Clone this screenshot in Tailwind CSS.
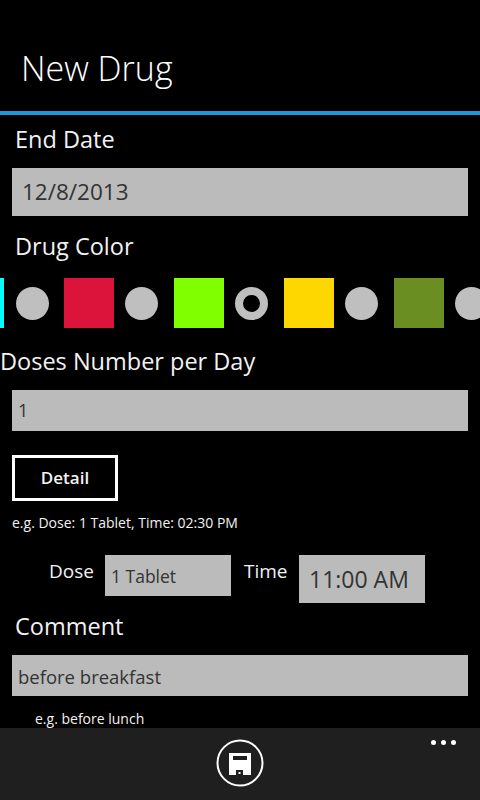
<!DOCTYPE html>
<html lang="en">

<head>
    <meta charset="UTF-8" />
    <meta name="viewport" content="width=device-width, initial-scale=1.0" />
    <title>New Drug</title>
    <script src="https://cdn.jsdelivr.net/npm/@tailwindcss/browser@4"></script>
</head>

<body class="bg-black">
    <div class="w-[480px] h-[800px] overflow-hidden flex flex-col bg-black text-[#f2f2f2] font-['Open_Sans',sans-serif]">
        <!-- Header -->
        <header class="h-[111px] shrink-0 pt-[43px] pl-[21px]">
            <h1 class="text-[34px] leading-[50px] font-light text-white">New Drug</h1>
        </header>
        <div class="h-1 shrink-0 bg-[#1b9ad8]"></div>

        <!-- Form -->
        <main class="flex-1 min-h-0 overflow-hidden">
            <div class="pl-[15px] mt-[6px] text-[23.5px] leading-[36px]">End Date</div>
            <div class="mx-3 mt-[11px] h-12 pl-[10px] bg-[#bbbbbb] text-[#333] text-[22.5px] leading-[48px]">12/8/2013</div>

            <div class="pl-[15px] mt-[13px] text-[23.5px] leading-[34px]">Drug Color</div>

            <!-- Color strip -->
            <div class="flex items-center w-[500px] h-[50px] mt-[15px] -ml-[46px]">
                <div class="w-[50px] h-[50px] shrink-0 bg-[#00ffff]"></div>
                <div class="w-[33px] h-[33px] shrink-0 ml-[12px] rounded-full bg-[#bfbfbf]"></div>
                <div class="w-[50px] h-[50px] shrink-0 ml-[15px] bg-[#dc143c]"></div>
                <div class="w-[33px] h-[33px] shrink-0 ml-[11px] rounded-full bg-[#bfbfbf]"></div>
                <div class="w-[50px] h-[50px] shrink-0 ml-[16px] bg-[#7fff00]"></div>
                <div class="w-[33px] h-[33px] shrink-0 ml-[11px] rounded-full border-[8px] border-[#bfbfbf] bg-black"></div>
                <div class="w-[50px] h-[50px] shrink-0 ml-[16px] bg-[#ffd700]"></div>
                <div class="w-[33px] h-[33px] shrink-0 ml-[11px] rounded-full bg-[#bfbfbf]"></div>
                <div class="w-[50px] h-[50px] shrink-0 ml-[16px] bg-[#6b8e23]"></div>
                <div class="w-[33px] h-[33px] shrink-0 ml-[11px] rounded-full bg-[#bfbfbf]"></div>
            </div>

            <div class="mt-[15px] text-[23.5px] leading-[36px]">Doses Number per Day</div>
            <div class="mx-3 mt-[11px] h-[41px] pl-[6px] bg-[#bbbbbb] text-[#333] text-[18px] leading-[41px]">1</div>

            <button class="block ml-3 mt-6 w-[106px] h-[46px] border-[3px] border-white text-[17px] font-semibold text-[#f2f2f2]">Detail</button>
            <div class="pl-3 mt-[13px] text-[14px] leading-[18px]">e.g. Dose: 1 Tablet, Time: 02:30 PM</div>

            <!-- Dose row -->
            <div class="flex items-start mt-[23px] pl-[49px]">
                <span class="w-[56px] text-[19px] leading-[32px]">Dose</span>
                <div class="w-[126px] h-[41px] pl-[6px] bg-[#bbbbbb] text-[#333] text-[17.5px] leading-[43px]">1 Tablet</div>
                <span class="ml-[13px] w-[55px] text-[19px] leading-[32px]">Time</span>
                <div class="w-[126px] h-12 pl-[10px] bg-[#bbbbbb] text-[#333] text-[23px] leading-[48px]">11:00 AM</div>
            </div>

            <div class="pl-[15px] mt-[5px] text-[23.5px] leading-[36px]">Comment</div>
            <div class="mx-3 mt-[11px] h-[41px] pl-[6px] bg-[#bbbbbb] text-[#333] text-[18.5px] leading-[43px]">before breakfast</div>
            <div class="pl-[35px] mt-[14px] text-[14px] leading-[18px]">e.g. before lunch</div>
        </main>

        <!-- App bar -->
        <footer class="relative h-[72px] shrink-0 bg-[#1f1f1f] flex justify-center pt-[11px]">
            <svg class="w-12 h-12" viewBox="0 0 48 48" fill="none">
                <circle cx="24" cy="24" r="22.5" stroke="#fff" stroke-width="2" />
                <path fill="#fff" fill-rule="evenodd"
                    d="M13 14h22v22H13zM17 17v4h14v-4zM20 31v5h7v-5z" />
                <rect x="22.5" y="33" width="2" height="2" fill="#fff" />
            </svg>
            <div class="absolute right-[24px] top-[12px] flex gap-[5px]">
                <span class="w-[5px] h-[5px] rounded-full bg-white"></span>
                <span class="w-[5px] h-[5px] rounded-full bg-white"></span>
                <span class="w-[5px] h-[5px] rounded-full bg-white"></span>
            </div>
        </footer>
    </div>
</body>

</html>
